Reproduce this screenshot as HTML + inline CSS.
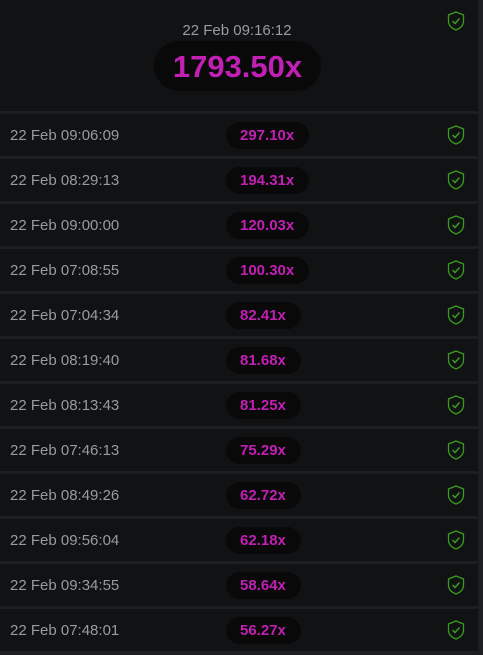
<!DOCTYPE html>
<html><head><style>
*{margin:0;padding:0;box-sizing:border-box}
body{width:483px;height:655px;background:#1d1e21;font-family:"Liberation Sans",sans-serif;overflow:hidden;position:relative}
.hdr{position:absolute;left:0;top:0;width:478px;height:111px;background:#111214}
.hdr .d{position:absolute;top:22px;left:0;width:474px;text-align:center;color:#9a9b9e;font-size:15px}
.hdr .p{position:absolute;left:154px;top:41px;width:167px;height:50px;border-radius:25px;background:#09090a;color:#c21fb5;font-weight:bold;font-size:31px;text-align:center;line-height:52px}
.row{position:absolute;left:0;width:478px;height:42px;background:#111214}
.row .d{position:absolute;left:10px;top:13px;color:#9a9b9e;font-size:15px}
.row .p{position:absolute;left:226px;top:8px;height:27px;line-height:28px;padding:0 15px 0 14px;border-radius:14px;background:#09090a;color:#c21fb5;font-weight:bold;font-size:15px}
svg{position:absolute;left:447px;width:18px;height:20px}
.row svg{top:11px}
</style></head><body>
<div class="hdr"><div class="d">22 Feb 09:16:12</div><div class="p">1793.50x</div>
<svg style="top:11px" viewBox="0 0 18 20"><path d="M9 1 L16.5 4 V10 C16.5 14.5 13 17.5 9 19 C5 17.5 1.5 14.5 1.5 10 V4 Z" fill="none" stroke="#3a9c1e" stroke-width="1.3"/><path d="M5.5 10 L8 12.5 L12.5 7.5" fill="none" stroke="#3a9c1e" stroke-width="1.5"/></svg></div>
<div id="rows"></div>
<script>
var d=[["22 Feb 09:06:09","297.10x"],["22 Feb 08:29:13","194.31x"],["22 Feb 09:00:00","120.03x"],["22 Feb 07:08:55","100.30x"],["22 Feb 07:04:34","82.41x"],["22 Feb 08:19:40","81.68x"],["22 Feb 08:13:43","81.25x"],["22 Feb 07:46:13","75.29x"],["22 Feb 08:49:26","62.72x"],["22 Feb 09:56:04","62.18x"],["22 Feb 09:34:55","58.64x"],["22 Feb 07:48:01","56.27x"]];
var s='<svg viewBox="0 0 18 20"><path d="M9 1 L16.5 4 V10 C16.5 14.5 13 17.5 9 19 C5 17.5 1.5 14.5 1.5 10 V4 Z" fill="none" stroke="#3a9c1e" stroke-width="1.3"/><path d="M5.5 10 L8 12.5 L12.5 7.5" fill="none" stroke="#3a9c1e" stroke-width="1.5"/></svg>';
var h='';d.forEach(function(r,i){h+='<div class="row" style="top:'+(114+i*45)+'px"><div class="d">'+r[0]+'</div><div class="p">'+r[1]+'</div>'+s+'</div>'});
document.getElementById('rows').innerHTML=h;
</script>
</body></html>
